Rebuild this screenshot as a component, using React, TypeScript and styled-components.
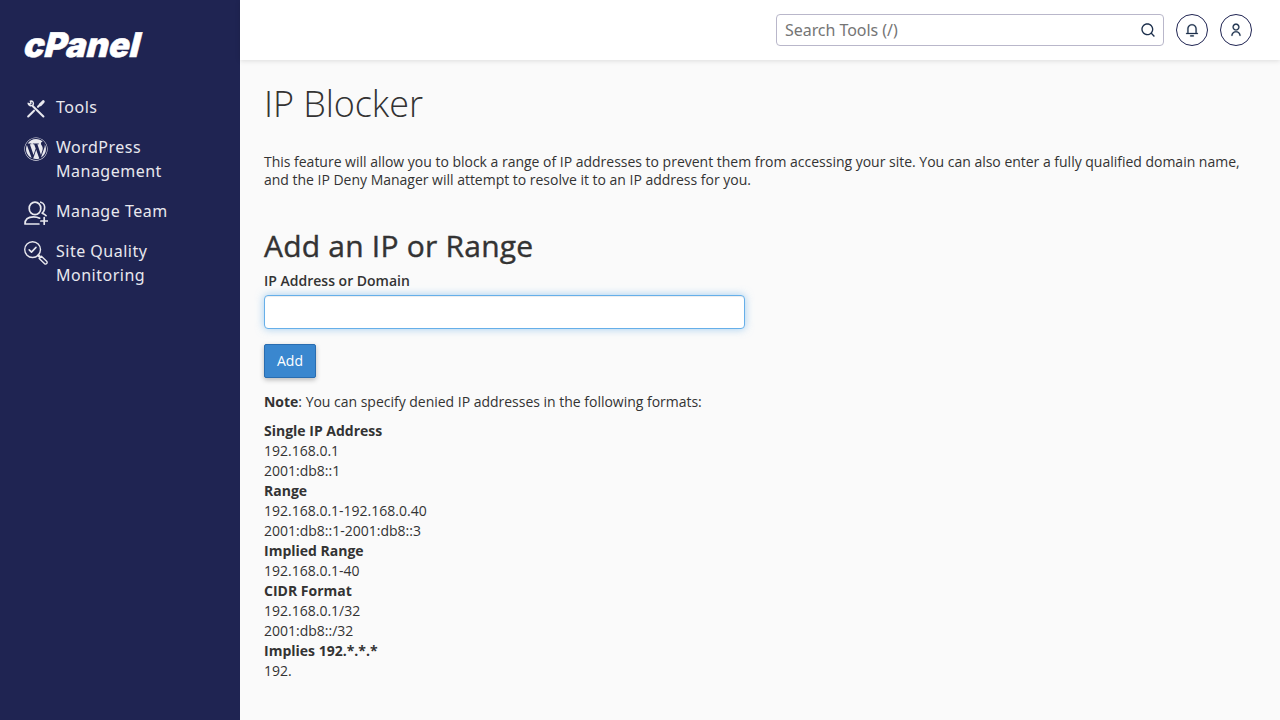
import React from "react";
import styled, { createGlobalStyle } from "styled-components";
import { RiSearchLine, RiNotification3Line, RiUserLine } from "react-icons/ri";
import { FaWordpress } from "react-icons/fa";

const GlobalStyle = createGlobalStyle`
  *, *::before, *::after { box-sizing: border-box; }
  body {
    margin: 0;
    background: #fafafa;
    color: #333;
    font: 14px/20px "Open Sans", sans-serif;
    overflow: hidden;
  }
`;

const Shell = styled.div`
  display: flex;
  height: 100vh;
`;

const Sidebar = styled.nav`
  flex: 0 0 240px;
  background: #1f2452;
  color: #e8e8ee;
`;

const Logo = styled.svg`
  display: block;
  width: 150px;
  height: 52px;
  margin: 18px 0 21px 16px;
  fill: #fff;
  stroke: #fff;
  stroke-width: 0.5;
  font: 900 34px Inter, sans-serif;
`;

const NavItem = styled.a`
  display: flex;
  gap: 8px;
  padding: 4px 24px 12px;
  font: 16px/24px "Noto Sans", sans-serif;
  letter-spacing: 0.5px;

  svg {
    flex: 0 0 24px;
    width: 24px;
    height: 24px;
    margin: 2px 0 -2px;
  }
`;

const Column = styled.div`
  flex: 1;
  display: flex;
  flex-direction: column;
`;

const TopBar = styled.header`
  flex: 0 0 60px;
  display: flex;
  align-items: center;
  justify-content: flex-end;
  gap: 12px;
  padding-right: 28px;
  background: #fff;
  box-shadow: 0 1px 5px rgba(0, 0, 0, 0.12);
`;

const SearchBox = styled.label`
  display: flex;
  align-items: center;
  width: 388px;
  height: 32px;
  padding: 0 7px 0 8px;
  border: 1px solid #b9b7ca;
  border-radius: 4px;
  color: #1c2f4c;
`;

const SearchInput = styled.input`
  flex: 1;
  min-width: 0;
  padding: 0;
  border: 0;
  outline: 0;
  background: none;
  font: 16px/24px "Noto Sans", sans-serif;
  letter-spacing: -0.05px;

  &::placeholder { color: #757575; }
`;

const RoundButton = styled.button`
  display: grid;
  place-items: center;
  width: 32px;
  height: 32px;
  padding: 0;
  border: 1px solid #1f2452;
  border-radius: 50%;
  background: #fff;
  color: #1c2f4c;

  svg { stroke-width: 0.4; }
`;

const Content = styled.main`
  padding: 23px 24px 0;
`;

const PageTitle = styled.h1`
  margin: 0 0 28px;
  font-size: 36px;
  font-weight: 300;
  letter-spacing: -0.08px;
  line-height: 42px;
`;

const Intro = styled.p`
  margin: 0 0 38px;
  letter-spacing: -0.013px;
  line-height: 18px;
`;

const SectionTitle = styled.h2`
  margin: 0 0 7px;
  font-size: 30px;
  font-weight: 400;
  letter-spacing: 0.22px;
  line-height: 37px;
  -webkit-text-stroke: 0.4px #333;
`;

const FieldLabel = styled.label`
  display: block;
  margin-bottom: 4px;
  font-weight: 600;
`;

const AddressInput = styled.input`
  display: block;
  width: 481px;
  height: 34px;
  border: 1px solid #66afe9;
  border-radius: 4px;
  outline: 0;
  background: #fff;
  box-shadow: inset 0 1px 1px rgba(0, 0, 0, 0.075), 0 0 8px rgba(102, 175, 233, 0.6);
`;

const AddButton = styled.button`
  display: block;
  width: 52px;
  height: 34px;
  margin: 15px 0 14px;
  padding: 0;
  border: 1px solid #2a6db0;
  border-radius: 2px;
  background: #3a87cf;
  color: #fff;
  font: inherit;
  box-shadow: 0 2px 5px rgba(0, 0, 0, 0.26);
`;

const Note = styled.p`
  margin: 0 0 9px;
  letter-spacing: -0.015px;
`;

const Formats = styled.dl`
  margin: 0;

  dt { font-weight: 700; }
  dd { margin: 0; }
`;

const line = { fill: "none", stroke: "currentColor", strokeLinecap: "round", strokeLinejoin: "round" } as const;

const ToolsIcon = () => (
  <svg viewBox="0 0 24 24" {...line}>
    <path d="M4.2 19.4 10 13.7M14 9.8l2.2-2.2" strokeWidth="2.1" />
    <path d="M16.4 7.6 19.2 4.7" strokeWidth="3" />
    <path d="m8.9 9.2 10.5 10.2" strokeWidth="2.1" />
    <path d="M6.3 4.1c2.4-.4 3.7 1.4 2.8 3.8-2.2 1.5-4.8.7-5-1.6l2 .8.9-.9z" strokeWidth="1.4" />
  </svg>
);

const TeamIcon = () => (
  <svg viewBox="0 0 24 24" {...line} strokeWidth="1.7">
    <ellipse cx="11" cy="7.4" rx="5.8" ry="6.3" />
    <path d="M16.8 1.2c3.4 1 4.3 4.5 3.6 7.4-.4 1.6-1.1 2.7-2.2 3.6 1.7.7 3 1.5 3.9 2.5" />
    <path d="M14.9 23H1c0-5.2 3.6-7.2 8.5-7.2 2.5 0 4.6.5 6.2 1.4M20.2 16.6v6.8M16.9 20h6.7" />
  </svg>
);

const MonitoringIcon = () => (
  <svg viewBox="0 0 24 24" {...line} strokeWidth="1.4">
    <circle cx="8.6" cy="8.6" r="7.9" />
    <path d="m5.2 8.9 2.3 2.2 4.5-4.7" strokeWidth="1.6" />
    <path d="m14.3 14.4 1.2 1.1" strokeWidth="2.4" />
    <path d="m15.2 17.4 2.2-2.2 5.2 5.1c1.6 1.6-.6 3.8-2.2 2.2z" />
  </svg>
);

const navItems = [
  { label: "Tools", icon: <ToolsIcon /> },
  { label: "WordPress Management", icon: <FaWordpress /> },
  { label: "Manage Team", icon: <TeamIcon /> },
  { label: "Site Quality Monitoring", icon: <MonitoringIcon /> },
];

const formats = [
  { name: "Single IP Address", examples: ["192.168.0.1", "2001:db8::1"] },
  { name: "Range", examples: ["192.168.0.1-192.168.0.40", "2001:db8::1-2001:db8::3"] },
  { name: "Implied Range", examples: ["192.168.0.1-40"] },
  { name: "CIDR Format", examples: ["192.168.0.1/32", "2001:db8::/32"] },
  { name: "Implies 192.*.*.*", examples: ["192."] },
];

export default function App() {
  return (
    <Shell>
      <GlobalStyle />
      <Sidebar>
        <Logo>
          <text x="6" y="0" textLength="116" lengthAdjust="spacingAndGlyphs" transform="translate(0 38.5) skewX(-14)">
            cPanel
          </text>
        </Logo>
        {navItems.map((item) => (
          <NavItem key={item.label}>
            {item.icon}
            <span>{item.label}</span>
          </NavItem>
        ))}
      </Sidebar>
      <Column>
        <TopBar>
          <SearchBox>
            <SearchInput placeholder="Search Tools (/)" />
            <RiSearchLine size={16} />
          </SearchBox>
          <RoundButton><RiNotification3Line size={14} /></RoundButton>
          <RoundButton><RiUserLine size={14} /></RoundButton>
        </TopBar>
        <Content>
          <PageTitle>IP Blocker</PageTitle>
          <Intro>
            This feature will allow you to block a range of IP addresses to prevent them from accessing your site. You
            can also enter a fully qualified domain name, and the IP Deny Manager will attempt to resolve it to an IP
            address for you.
          </Intro>
          <SectionTitle>Add an IP or Range</SectionTitle>
          <FieldLabel htmlFor="address">IP Address or Domain</FieldLabel>
          <AddressInput id="address" />
          <AddButton>Add</AddButton>
          <Note><b>Note</b>: You can specify denied IP addresses in the following formats:</Note>
          <Formats>
            {formats.map((format) => (
              <React.Fragment key={format.name}>
                <dt>{format.name}</dt>
                {format.examples.map((example) => <dd key={example}>{example}</dd>)}
              </React.Fragment>
            ))}
          </Formats>
        </Content>
      </Column>
    </Shell>
  );
}
